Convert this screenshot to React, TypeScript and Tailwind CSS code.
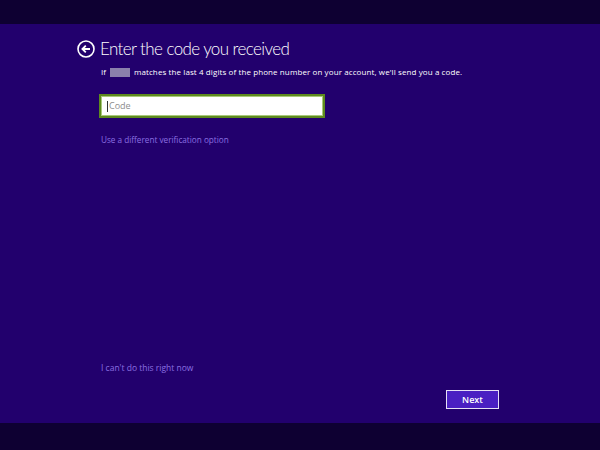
import React from "react";

export default function App() {
  return (
    <div
      className="w-[600px] h-[450px] flex flex-col bg-[#22006d] overflow-hidden"
      style={{ fontFamily: '"Open Sans", "Noto Sans", sans-serif' }}
    >
      <div className="h-[24px] bg-[#0e0032] shrink-0" />
      <div className="flex-1 flex flex-col pl-[77px] pr-[101px] pt-[15px] pb-[14px]">
        <div className="flex items-center h-[20px]">
          <svg width="18" height="18" viewBox="0 0 18 18" className="shrink-0">
            <circle cx="9" cy="9" r="8" fill="none" stroke="#ffffff" strokeWidth="1.6" />
            <path d="M13 9 H5.5 M8.8 5.6 L5.4 9 L8.8 12.4" fill="none" stroke="#ffffff" strokeWidth="1.8" />
          </svg>
          <span
            className="ml-[5px] text-white text-[17px] leading-[20px] font-light tracking-[-0.6px]"
            style={{ fontFamily: 'Lato, "Liberation Sans", sans-serif' }}
          >
            Enter the code you received
          </span>
        </div>
        <div className="ml-[24px] mt-[7px] flex items-center text-white text-[8px] leading-[12px]">
          <span>If</span>
          <span className="inline-block w-[20px] h-[9px] bg-[#8a80ac] mx-[4px]" />
          <span className="tracking-[0.1px]">matches the last 4 digits of the phone number on your account, we'll send you a code.</span>
        </div>
        <div className="ml-[22px] mt-[16px] w-[226px] h-[24px] border-2 border-[#5e8a1e] bg-white flex items-center">
          <div className="w-full h-full border border-[#a9c97a] flex items-center pl-[5px]">
            <span className="w-px h-[11px] bg-[#333]" />
            <span className="text-[9px] text-[#8d8d8d] ml-px">Code</span>
          </div>
        </div>
        <div className="ml-[24px] mt-[16px] text-[8.2px] leading-[12px] text-[#8a6fe0]">
          Use a different verification option
        </div>
        <div className="flex-1" />
        <div className="ml-[24px] text-[8.5px] leading-[12px] text-[#8a6fe0]">
          I can't do this right now
        </div>
        <div className="flex justify-end mt-[16px]">
          <div className="w-[53px] h-[19px] border border-[#e6e0f5] bg-[#4a1fc2] flex items-center justify-center text-white text-[9px] font-semibold">
            Next
          </div>
        </div>
      </div>
      <div className="h-[27px] bg-[#0e0032] shrink-0" />
    </div>
  );
}
